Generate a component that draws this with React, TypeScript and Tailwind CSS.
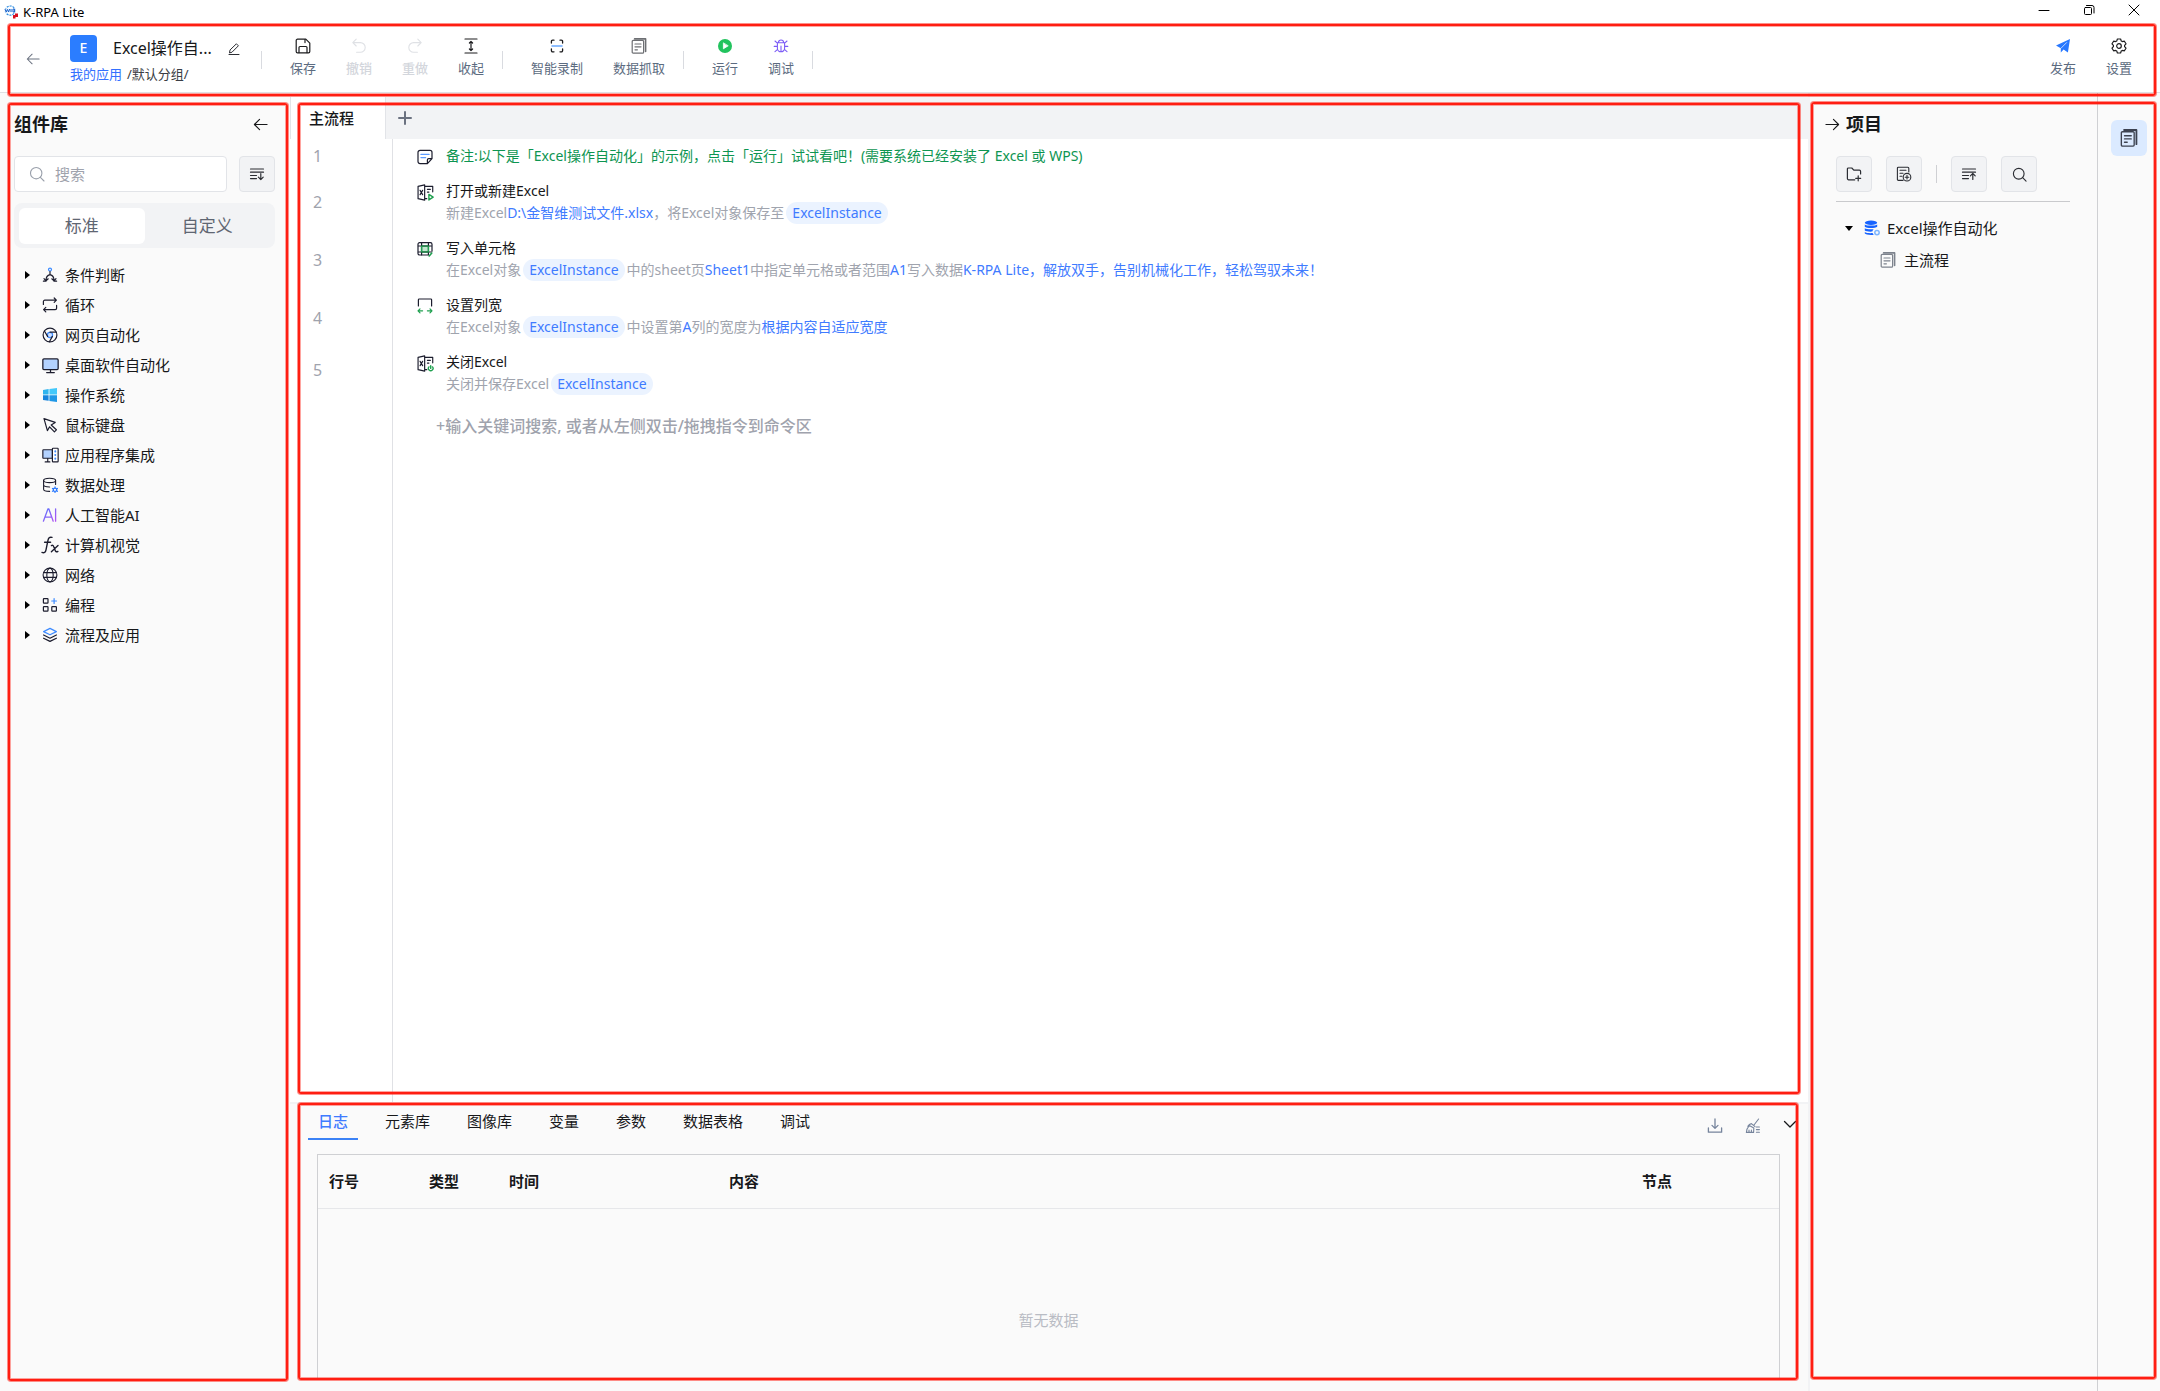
import React, { ReactNode } from "react";
import { clsx } from "clsx";

type IconProps = { className?: string; children: ReactNode; box?: number; sw?: number };

function Svg({ className = "size-4", children, box = 16, sw = 1.2 }: IconProps) {
  return (
    <svg
      viewBox={`0 0 ${box} ${box}`}
      className={clsx("shrink-0", className)}
      fill="none"
      stroke="currentColor"
      strokeWidth={sw}
      strokeLinecap="round"
      strokeLinejoin="round"
      aria-hidden="true"
    >
      {children}
    </svg>
  );
}

/* ---------- shared icons ---------- */

const ArrowLeft = ({ className }: { className?: string }) => (
  <Svg className={className}>
    <path d="M15 8H1.5M7 2.5L1.5 8L7 13.5" />
  </Svg>
);

const ArrowRight = ({ className }: { className?: string }) => (
  <Svg className={className}>
    <path d="M1 8h13.5M9 2.5L14.5 8L9 13.5" />
  </Svg>
);

const SearchIcon = ({ className, sw }: { className?: string; sw?: number }) => (
  <Svg className={className} sw={sw}>
    <circle cx="7.2" cy="7.2" r="5.7" />
    <path d="M11.4 11.4L15 15" />
  </Svg>
);

const DocStack = ({ className }: { className?: string }) => (
  <Svg className={className} sw={1.2}>
    <path d="M3.6 0.9h11v12.6" strokeWidth="1.6" />
    <rect x="1.2" y="2.4" width="11.4" height="12.8" rx="1" />
    <path d="M4 6h6M4 8.8h6M4 11.8h2.4" />
  </Svg>
);

const CollapseAll = ({ up }: { up?: boolean }) => (
  <Svg className="size-4">
    <path d="M1.5 3h13M1.5 6.2h13M1.5 9.5h6M1.5 12.6h6" />
    {up ? <path d="M11.8 13.4V7.4M9.4 9.8l2.4-2.4 2.4 2.4" /> : <path d="M11.8 7.6v6M9.4 11.2l2.4 2.4 2.4-2.4" />}
  </Svg>
);

/* ---------- toolbar icons ---------- */

const SaveIcon = () => (
  <Svg className="size-4" sw={1.2}>
    <path d="M2.5 1.2h8.3l4 4v8.3a1.3 1.3 0 0 1-1.3 1.3H2.5a1.3 1.3 0 0 1-1.3-1.3V2.5a1.3 1.3 0 0 1 1.3-1.3z" />
    <path d="M4 14.6V9.5a1 1 0 0 1 1-1h6a1 1 0 0 1 1 1v5.1M10 1.6v3" />
  </Svg>
);

const UndoIcon = () => (
  <Svg className="size-4" sw={1.1}>
    <path d="M5.2 1.2L1.8 4.6l3.4 3.4M1.8 4.6h7.6a4.8 4.8 0 0 1 0 9.6H5.6" />
  </Svg>
);

const RedoIcon = () => (
  <Svg className="size-4" sw={1.1}>
    <path d="M10.8 1.2l3.4 3.4-3.4 3.4M14.2 4.6H6.6a4.8 4.8 0 0 0 0 9.6h3.8" />
  </Svg>
);

const FoldIcon = () => (
  <Svg className="size-4" sw={1.2}>
    <path d="M2 1h12M2 15h12M8 3.4v9.2M6.4 5L8 3.4 9.6 5M6.4 11L8 12.6 9.6 11" />
  </Svg>
);

const RecordIcon = () => (
  <Svg className="size-4" sw={1.3}>
    <path d="M2.4 5V3.4a1.2 1.2 0 0 1 1.2-1.2H5M11 2.2h1.4a1.2 1.2 0 0 1 1.2 1.2V5M13.6 11v1.6a1.2 1.2 0 0 1-1.2 1.2H11M5 13.8H3.6a1.2 1.2 0 0 1-1.2-1.2V11" />
    <path d="M3.2 8h9.6" stroke="#8ebeff" strokeWidth="2" />
  </Svg>
);

const RunIcon = () => (
  <Svg className="size-4">
    <circle cx="8" cy="8" r="7" fill="#22c35e" stroke="none" />
    <path d="M6.4 5.2v5.6L10.9 8z" fill="#fff" stroke="#fff" strokeWidth="0.8" />
  </Svg>
);

const BugIcon = () => (
  <Svg className="size-4" sw={1.1}>
    <path d="M5.4 4.6a2.6 2.6 0 0 1 5.2 0M4.4 4.8h7.2v5.4a3.6 3.6 0 0 1-7.2 0zM8 8v5.6M1.2 8.4h3.2M11.6 8.4h3.2M2 3l2.4 2.2M14 3l-2.4 2.2M2 13.6l2.6-2.2M14 13.6l-2.6-2.2" />
  </Svg>
);

const SendIcon = () => (
  <Svg className="size-4">
    <path d="M15 1L12.9 14.6 8.6 11.6 5.8 14.4V10.2L1 7.6z" fill="#2878ff" stroke="none" />
    <path d="M6 10.2L11.6 4.6" stroke="#fff" strokeWidth="0.7" />
  </Svg>
);

const GearIcon = () => (
  <Svg className="size-4" sw={1.2}>
    <path d="M6.4 1h3.2l.6 1.9 1.2.7 2-.4 1.6 2.6L13.6 7.3v1.4l1.4 1.5-1.6 2.6-2-.4-1.2.7L9.6 15H6.4l-.6-1.9-1.2-.7-2 .4L1 10.2l1.4-1.5V7.3L1 5.8l1.6-2.6 2 .4 1.2-.7z" />
    <circle cx="8" cy="8" r="2.3" />
  </Svg>
);

/* ---------- component tree icons ---------- */

const treeIcons: Record<string, ReactNode> = {
  branch: (
    <Svg>
      <circle cx="8" cy="2.6" r="1.5" stroke="#3d8bff" />
      <path d="M8 4.6v3M8 7.6c-2.6.6-4 2.6-4 5.8M8 7.6c2.6.6 4 2.6 4 5.8M2 11.6l2 2.2 2.2-2M9.800 11.800l2.200 2 2-2.200M1.400 14.200h2.600M12 14.200h2.600" />
    </Svg>
  ),
  loop: (
    <Svg>
      <path d="M1.4 7.4V4.6a1.4 1.4 0 0 1 1.4-1.4h11.4M12.2 1l2.2 2.2-2.2 2.2M14.6 8.400v2.800a1.4 1.4 0 0 1-1.4 1.4H1.8M3.800 10.400l-2.200 2.200 2.200 2.200" />
    </Svg>
  ),
  chrome: (
    <Svg>
      <circle cx="8" cy="8" r="6.9" />
      <circle cx="8" cy="8" r="2.6" stroke="#3d8bff" fill="#cfe1ff" />
      <path d="M8 5.2h6.2M5.6 9.4L2.4 4M10.4 9.4l-3 5.4" />
    </Svg>
  ),
  monitor: (
    <Svg className="size-[17px]">
      <rect x="0.8" y="1.8" width="14.4" height="10" rx="1" fill="#b3d2ff" />
      <path d="M8 12v2.4M4.4 14.6h7.2" />
    </Svg>
  ),
  windows: (
    <Svg>
      <g stroke="none">
        <path d="M1 3l5.6-.9v5.4H1z" fill="#2fb4ee" />
        <path d="M7.4 2L15 .9v6.6H7.4z" fill="#43c8fa" />
        <path d="M1 8.3h5.6v5.5L1 13z" fill="#1683dc" />
        <path d="M7.4 8.3H15v6.8L7.4 14z" fill="#1e97e6" />
      </g>
    </Svg>
  ),
  mouse: (
    <Svg>
      <path d="M2 1.6l11.2 3.8-4 2.6 5.2 4.8-2 2-4.8-5-2.2 3.8z" />
    </Svg>
  ),
  apps: (
    <Svg className="size-[17px]" sw={1.1}>
      <rect x="0.8" y="2.6" width="9" height="8" rx="0.6" fill="#b3d2ff" />
      <path d="M5.4 10.8v3M3 14h4.4" />
      <rect x="9.8" y="1.2" width="5.4" height="12.8" rx="0.6" fill="#fff" />
      <path d="M12.5 4v.2M12.5 7.4v.2M12.5 10.8v.2" stroke="#3d8bff" strokeWidth="1.8" />
    </Svg>
  ),
  data: (
    <Svg sw={1.1}>
      <ellipse cx="7.6" cy="3.4" rx="6" ry="2.2" />
      <path d="M1.6 3.4v8.8c0 1.2 2.4 2.2 6 2.2M13.6 3.4v4M1.6 7.8c0 1.2 2.4 2.2 6 2.2" />
      <circle cx="13" cy="12.8" r="1.7" stroke="#2878ff" strokeWidth="1.2" />
      <path d="M13 9.9v1M13 14.8v1M10.4 11.4l.9.5M14.7 13.8l.9.5M15.6 11.4l-.9.5M11.3 13.8l-.9.5" stroke="#2878ff" />
    </Svg>
  ),
  ai: (
    <Svg sw={1.3}>
      <defs>
        <linearGradient id="ai-stroke" x1="0" y1="0" x2="16" y2="16" gradientUnits="userSpaceOnUse">
          <stop offset="0" stopColor="#4f7bff" />
          <stop offset="1" stopColor="#c04cf0" />
        </linearGradient>
      </defs>
      <path d="M1.4 14.2L6 1.8h.8l4.4 12.4M3 10.2h6.6M13.6 1.8v12.4" stroke="url(#ai-stroke)" />
    </Svg>
  ),
  fx: (
    <Svg className="size-[18px]" box={18} sw={1.4}>
      <path d="M11 1.4C8.400.6 7.400 2.2 6.900 4.600L5 13.8c-.5 2.600-2 3.600-4 2.600M3.600 6.200h6" />
      <path d="M10.400 9.600c1.400-.8 2 0 2.500 1.400l1.300 3.400c.5 1.400 1.400 1.800 2.700 1M17 9.600l-6.600 6.200" />
    </Svg>
  ),
  globe: (
    <Svg sw={1.1}>
      <circle cx="8" cy="8" r="6.9" />
      <ellipse cx="8" cy="8" rx="3.2" ry="6.9" />
      <path d="M1.6 5.6h12.8M1.6 10.4h12.8" />
    </Svg>
  ),
  code: (
    <Svg>
      <rect x="1.4" y="1.6" width="4.6" height="4.6" rx="0.6" />
      <rect x="1.4" y="9.6" width="4.6" height="4.6" rx="0.6" />
      <rect x="9.8" y="9.6" width="4.6" height="4.6" rx="0.6" />
      <path d="M12.1 1.6v4.8M9.7 4h4.8" stroke="#3d8bff" />
    </Svg>
  ),
  layers: (
    <Svg>
      <path d="M8 1.4l6.4 3.2L8 7.800 1.600 4.600z" stroke="#3d8bff" />
      <path d="M1.6 8L8 11.2 14.4 8M1.6 11.2L8 14.4l6.400-3.200" />
    </Svg>
  ),
};

const tree: [string, string][] = [
  ["branch", "条件判断"],
  ["loop", "循环"],
  ["chrome", "网页自动化"],
  ["monitor", "桌面软件自动化"],
  ["windows", "操作系统"],
  ["mouse", "鼠标键盘"],
  ["apps", "应用程序集成"],
  ["data", "数据处理"],
  ["ai", "人工智能AI"],
  ["fx", "计算机视觉"],
  ["globe", "网络"],
  ["code", "编程"],
  ["layers", "流程及应用"],
];

/* ---------- step icons ---------- */

const NoteIcon = () => (
  <Svg className="size-4">
    <path d="M10.4 14.6H3a2 2 0 0 1-2-2V3.400a2 2 0 0 1 2-2h10a2 2 0 0 1 2 2v6.200zM10.400 14.400V11a1.300 1.300 0 0 1 1.300-1.300h3.200" />
    <path d="M4 5.4h8M4 8.600h4.600" stroke="#5b9bff" strokeWidth="1.4" />
  </Svg>
);

const ExcelIcon = ({ children }: { children: ReactNode }) => (
  <Svg className="size-[17px]" sw={1.1}>
    <path d="M1 2.200L7.200.800v14.400L1 13.800zM7.200 2.200h7.600v5.200M9.800 5h2.800M9.800 7.600h1.400M7.200 13.800h2M2.900 6l2.400 4M5.300 6l-2.400 4" />
    <g stroke="#1fa04f" strokeWidth="1.3">{children}</g>
  </Svg>
);

const CellIcon = () => (
  <Svg className="size-4">
    <rect x="4.4" y="5" width="7.200" height="6" fill="#bfe8cd" stroke="#1fa04f" />
    <path d="M1.400 5h13M1.400 11h13M4.600 1.800v12M11.400 1.800v12" />
    <path d="M4.600 5h6.800v6H4.600z" stroke="#1fa04f" />
    <path d="M11 14H2.600A1.600 1.600 0 0 1 1 12.400V3.200a1.600 1.600 0 0 1 1.600-1.600h10.800A1.600 1.600 0 0 1 15 3.200v7" />
    <path d="M14.800 12l-2.600 3" stroke="#1fa04f" strokeWidth="1.600" />
  </Svg>
);

const WidthIcon = () => (
  <Svg className="size-4">
    <path d="M1.400 8V1.800a.8.8 0 0 1 .8-.8h11.600a.8.8 0 0 1 .8.800V8" />
    <path d="M1 12.800h4.600M3 10.800l-2 2 2 2M10.400 12.800H15M13 10.800l2 2-2 2" stroke="#1fa04f" />
  </Svg>
);

/* ---------- small building blocks ---------- */

function Frame({ className }: { className: string }) {
  return (
    <div
      className={clsx(
        "pointer-events-none absolute z-10 rounded-[3px] border-2 border-[#ff1e12] shadow-[0_0_0_1px_rgba(255,30,18,0.5),inset_0_0_0_1px_rgba(255,30,18,0.4)]",
        className
      )}
    />
  );
}

function Tool({ icon, label, disabled }: { icon: ReactNode; label: string; disabled?: boolean }) {
  return (
    <button
      type="button"
      disabled={disabled}
      className={clsx(
        "flex flex-col items-center gap-1.5 px-[15px] text-[13px] leading-4",
        disabled ? "font-medium text-[#d3d6dc]" : "text-[#5c6b80]"
      )}
    >
      <span className={disabled ? "text-[#dfe1e5]" : "text-[#1c1c1e]"}>{icon}</span>
      {label}
    </button>
  );
}

const Divider = () => <span className="mt-1.5 mr-[13px] ml-[3px] h-[18px] w-px bg-[#d9dbe0]" />;

function SquareButton({ label, children }: { label: string; children: ReactNode }) {
  return (
    <button
      type="button"
      aria-label={label}
      className="flex size-9 shrink-0 items-center justify-center rounded border border-[#e2e4e8] bg-[#f2f3f5] text-[#2b2d33]"
    >
      {children}
    </button>
  );
}

const Pill = ({ children }: { children: ReactNode }) => (
  <span className="mx-0.5 inline-block h-[22px] rounded-full bg-[#ebf3ff] px-1.5 text-[#3f7bff]">{children}</span>
);

const Val = ({ children }: { children: ReactNode }) => <span className="text-[#3f7bff]">{children}</span>;

function Step({ icon, title, children }: { icon: ReactNode; title: string; children: ReactNode }) {
  return (
    <li className="flex h-[57px] gap-3">
      <span className="mt-0.5 flex h-5 w-[18px] items-center justify-center text-[#1c1d2e]">{icon}</span>
      <div className="text-[14px] leading-[22px]">
        <p className="h-[22px] text-[#17181a]">{title}</p>
        <p className="h-[22px] text-[#a0a4ae]">{children}</p>
      </div>
    </li>
  );
}

/* ---------- page sections ---------- */

function TitleBar() {
  return (
    <div className="flex h-[23px] shrink-0 items-center bg-white">
      <svg viewBox="0 0 16 14" className="ml-1 h-[14px] w-4" fill="none" aria-hidden="true">
        <ellipse cx="6.2" cy="5.6" rx="4.8" ry="4.600" stroke="#2b8be0" strokeWidth="1.200" strokeDasharray="2 1" />
        <rect x="0.5" y="3.6" width="11.4" height="4" fill="#e8f3ff" />
        <path d="M1 4l1.200 3L3.400 4.400 4.600 7 5.600 4M7 4v3M9 4v3h1.600V4z" stroke="#1760c8" strokeWidth="1" />
        <path d="M9 10h2V8.500h3V12h-2.500v1.500H9z" fill="#d8101f" />
      </svg>
      <span className="ml-[3px] text-[13px] leading-4 text-black">K-RPA Lite</span>
      <div className="mr-5 ml-auto flex items-center gap-[33px] pb-1 text-black">
        <button type="button" aria-label="最小化">
          <Svg className="size-3" box={12} sw={1}>
            <path d="M1 6.500h10" />
          </Svg>
        </button>
        <button type="button" aria-label="还原">
          <Svg className="size-3" box={12} sw={1}>
            <rect x="1.500" y="3.500" width="7" height="7" rx="1" />
            <path d="M3.500 1.500h5.500a2 2 0 0 1 2 2V9" />
          </Svg>
        </button>
        <button type="button" aria-label="关闭">
          <Svg className="size-3" box={12} sw={1}>
            <path d="M1 1l10 10M11 1L1 11" />
          </Svg>
        </button>
      </div>
    </div>
  );
}

function Header() {
  return (
    <header className="relative flex h-[70px] shrink-0 items-start border-b border-[#dfe0e4] bg-white">
      <Frame className="top-px right-1 -bottom-1 left-2" />
      <button type="button" aria-label="返回" className="mt-[29px] ml-[26px] text-[#6b7280]">
        <ArrowLeft className="size-[14px]" />
      </button>
      <div className="mt-3 ml-[30px] w-[191px]">
        <div className="flex h-[27px] items-center">
          <span className="flex size-[27px] items-center justify-center rounded-sm bg-[#2b7dff] pb-0.5 text-[14px] leading-4 font-medium text-white">
            E
          </span>
          <h1 title="Excel操作自动化" className="ml-4 w-[103px] pb-0.5 text-[16px] leading-6 whitespace-nowrap text-[#17181a]">
            Excel操作自...
          </h1>
          <button type="button" aria-label="重命名" className="ml-3 text-[#2b2d33]">
            <Svg className="size-3" box={12} sw={1}>
              <path d="M1.500 9.500l.6-2.600L8.400.800l2 2-6.200 6.200zM1 11.500h10" />
            </Svg>
          </button>
        </div>
        <nav className="mt-0.5 flex gap-[5px] text-[13px] leading-5">
          <a href="#apps" className="text-[#3370ff]">
            我的应用
          </a>
          <span className="text-[#3a3d44]">/默认分组/</span>
        </nav>
      </div>
      <div className="mt-[15px] -ml-[3px] flex items-center">
        <Divider />
        <Tool icon={<SaveIcon />} label="保存" />
        <Tool icon={<UndoIcon />} label="撤销" disabled />
        <Tool icon={<RedoIcon />} label="重做" disabled />
        <Tool icon={<FoldIcon />} label="收起" />
        <Divider />
        <Tool icon={<RecordIcon />} label="智能录制" />
        <Tool
          icon={
            <span className="text-[#6d6f73]">
              <DocStack className="size-4" />
            </span>
          }
          label="数据抓取"
        />
        <Divider />
        <Tool icon={<RunIcon />} label="运行" />
        <Tool
          icon={
            <span className="text-[#7c5cf6]">
              <BugIcon />
            </span>
          }
          label="调试"
        />
        <Divider />
      </div>
      <div className="mt-[15px] mr-[13px] ml-auto flex">
        <Tool icon={<SendIcon />} label="发布" />
        <Tool icon={<GearIcon />} label="设置" />
      </div>
    </header>
  );
}

function Library() {
  return (
    <aside className="relative w-[290px] shrink-0 pr-[15px] pl-[14px]">
      <Frame className="top-2.5 right-0.5 bottom-2.5 left-2" />
      <div className="mt-[17px] flex h-7 items-center justify-between pr-[7px]">
        <h2 className="text-[18px] leading-7 font-bold text-[#17181a]">组件库</h2>
        <button type="button" aria-label="收起组件库" className="text-[#17181a]">
          <ArrowLeft className="size-[15px]" />
        </button>
      </div>
      <div className="mt-[18px] flex gap-3">
        <label className="flex h-9 min-w-0 flex-1 items-center gap-2.5 rounded border border-[#e2e4e8] bg-white pl-[14px] text-[#9aa0ab]">
          <SearchIcon className="size-4" sw={1.1} />
          <input
            type="text"
            aria-label="搜索"
            placeholder="搜索"
            className="w-full min-w-0 bg-transparent text-[15px] leading-6 outline-none placeholder:text-[#9fa3ad]"
          />
        </label>
        <SquareButton label="全部收起">
          <CollapseAll />
        </SquareButton>
      </div>
      <div className="mt-[11px] grid h-[45px] grid-cols-2 rounded-lg bg-[#f2f3f5] p-[5px] text-[17px] leading-6 text-[#5f6672]">
        <button type="button" className="h-9 rounded-md bg-white">
          标准
        </button>
        <button type="button" className="h-9">
          自定义
        </button>
      </div>
      <ul className="mt-3">
        {tree.map(([icon, label]) => (
          <li key={label} className="flex h-[30px] items-center pl-[11px] text-[15px] leading-6 text-[#17181a]">
            <svg viewBox="0 0 5 8" className="h-2 w-[5px]" aria-hidden="true">
              <path d="M0 0l5 4-5 4z" fill="#000" />
            </svg>
            <span className="ml-[11px] flex w-[18px] justify-center text-[#1c1d2e]">{treeIcons[icon]}</span>
            <span className="ml-[6px]">{label}</span>
          </li>
        ))}
      </ul>
    </aside>
  );
}

function Editor() {
  return (
    <section className="relative flex min-h-0 flex-1 flex-col bg-white">
      <Frame className="top-2.5 right-2 bottom-2 left-2" />
      <div className="mt-1 flex h-[42px] shrink-0 bg-[#f2f3f5]">
        <button
          type="button"
          className="w-24 border-x border-[#e2e4e8] bg-white pl-[18px] text-left text-[15px] leading-6 font-medium text-[#17181a]"
        >
          主流程
        </button>
        <button type="button" aria-label="新建流程" className="ml-3 text-[#6b7280]">
          <Svg className="size-[14px]" box={14} sw={2}>
            <path d="M7 1v12M1 7h12" />
          </Svg>
        </button>
      </div>
      <div className="flex min-h-0 flex-1">
        <ol className="w-[103px] shrink-0 border-r border-[#e0e1e5] pl-[23px] text-[16px] leading-6 text-[#9fa3ad]">
          <li className="flex h-[34px] items-center">1</li>
          <li className="flex h-[58px] items-center">2</li>
          <li className="flex h-[58px] items-center">3</li>
          <li className="flex h-[57px] items-center">4</li>
          <li className="flex h-[47px] items-center">5</li>
        </ol>
        <div className="min-w-0 flex-1 pl-[23px] whitespace-nowrap">
          <ul>
            <li className="flex h-[41px] gap-3 pt-[6px]">
              <span className="mt-0.5 flex h-5 w-[18px] items-center justify-center text-[#1c1d2e]">
                <NoteIcon />
              </span>
              <p className="text-[14px] leading-[22px] text-[#0d9551]">
                备注:以下是「Excel操作自动化」的示例，点击「运行」试试看吧！(需要系统已经安装了 Excel 或 WPS)
              </p>
            </li>
            <Step
              icon={
                <ExcelIcon>
                  <path d="M11.200 9.800v5.200l4-2.600z" />
                </ExcelIcon>
              }
              title="打开或新建Excel"
            >
              新建Excel<Val>D:\金智维测试文件.xlsx</Val>，将Excel对象保存至<Pill>ExcelInstance</Pill>
            </Step>
            <Step icon={<CellIcon />} title="写入单元格">
              在Excel对象<Pill>ExcelInstance</Pill>中的sheet页<Val>Sheet1</Val>中指定单元格或者范围<Val>A1</Val>写入数据
              <Val>K-RPA Lite，解放双手，告别机械化工作，轻松驾驭未来！</Val>
            </Step>
            <Step icon={<WidthIcon />} title="设置列宽">
              在Excel对象<Pill>ExcelInstance</Pill>中设置第<Val>A</Val>列的宽度为<Val>根据内容自适应宽度</Val>
            </Step>
            <Step
              icon={
                <ExcelIcon>
                  <path d="M11.200 11.200a2.200 2.200 0 1 0 3.400 0M12.900 10v2.600" />
                </ExcelIcon>
              }
              title="关闭Excel"
            >
              关闭并保存Excel<Pill>ExcelInstance</Pill>
            </Step>
          </ul>
          <p className="mt-1.5 ml-5 text-[16px] leading-6 font-medium text-[#9fa3ad]">
            +输入关键词搜索, 或者从左侧双击/拖拽指令到命令区
          </p>
        </div>
      </div>
    </section>
  );
}

const tabs = ["日志", "元素库", "图像库", "变量", "参数", "数据表格", "调试"];

function LogPanel() {
  return (
    <section className="relative flex h-[289px] shrink-0 flex-col border-t-2 border-[#f2f3f5] bg-[#fafafa] pr-7 pb-3 pl-[27px]">
      <Frame className="-top-px right-2.5 bottom-[11px] left-2" />
      <div className="-mr-[17px] -ml-[9px] flex h-[50px] items-start">
        <div role="tablist" className="flex gap-[17px]">
          {tabs.map((t, i) => (
            <button
              key={t}
              type="button"
              role="tab"
              aria-selected={i === 0}
              className={clsx(
                "h-9 border-b-2 px-2.5 text-[15px] leading-[34px]",
                i === 0 ? "border-[#3b82f6] font-medium text-[#3f7bff]" : "border-transparent text-[#17181a]"
              )}
            >
              {t}
            </button>
          ))}
        </div>
        <div className="mt-[14px] ml-auto flex items-start gap-[22px] text-[#76849c]">
          <button type="button" aria-label="下载日志">
            <Svg className="size-4" sw={1.3}>
              <path d="M8 1v9M5 7.400L8 10.400l3-3M1.400 10v4.200h13.200V10" />
            </Svg>
          </button>
          <button type="button" aria-label="清空日志">
            <Svg className="size-4" sw={1.1}>
              <path d="M13.600 1L9 7M6.400 5.600l3.600 3M2.800 8.200c1-1.600 2.400-2.400 3.600-2.600M1.400 14.400c.2-2.600.8-4.600 2-5.600l1.400-1 4 2.200-.2 4.400zM4 14v-2M6.400 14v-2M11.400 9h3M11.400 11.600h3M11.400 14.200h3" />
            </Svg>
          </button>
          <button type="button" aria-label="收起面板" className="text-[#17181a]">
            <Svg className="size-[14px]" box={14} sw={1.3}>
              <path d="M1.500 3.500L7 9l5.500-5.500" />
            </Svg>
          </button>
        </div>
      </div>
      <div className="flex min-h-0 flex-1 flex-col border border-b-0 border-[#cfd0d3]">
        <table className="w-full table-fixed text-left text-[15px] leading-6 text-[#17181a]">
          <thead>
            <tr className="h-[53px] border-b border-[#e6e7ea]">
              <th className="w-[100px] pl-[11px] font-bold">行号</th>
              <th className="w-20 pl-[11px] font-bold">类型</th>
              <th className="w-[220px] pl-[11px] font-bold">时间</th>
              <th className="pl-[11px] font-bold">内容</th>
              <th className="w-[148px] pl-[11px] font-bold">节点</th>
            </tr>
          </thead>
        </table>
        <p className="mt-[99px] text-center text-[15px] leading-6 text-[#b9bcc4]">暂无数据</p>
      </div>
    </section>
  );
}

function ProjectPanel() {
  return (
    <aside className="relative flex w-[352px] shrink-0 border-l-2 border-[#f2f3f5]">
      <Frame className="top-[9px] right-1 bottom-3 left-px" />
      <div className="flex-1 pr-[27px] pl-[26px]">
        <div className="mt-[17px] -ml-[11px] flex h-7 items-center gap-1.5">
          <button type="button" aria-label="收起项目" className="text-[#17181a]">
            <ArrowRight className="size-[15px]" />
          </button>
          <h2 className="text-[18px] leading-7 font-bold text-[#17181a]">项目</h2>
        </div>
        <div className="mt-[18px] flex h-[46px] items-start gap-[14px] border-b border-[#c9cacd]">
          <SquareButton label="新建文件夹">
            <Svg>
              <path d="M8.800 13.800H2.600a1.200 1.200 0 0 1-1.200-1.200V3a1 1 0 0 1 1-1h3.400l2 2.200h5.600a1.200 1.200 0 0 1 1.200 1.200V8M12.200 9.800v5M9.700 12.300h5" />
            </Svg>
          </SquareButton>
          <SquareButton label="新建流程">
            <Svg sw={1.1}>
              <path d="M7 14.400H2.400a1 1 0 0 1-1-1V2.200a1 1 0 0 1 1-1h9.400a1 1 0 0 1 1 1V6M4 4.200h6M4 7.200h3M4 10.200h2" />
              <circle cx="11" cy="11.200" r="3.800" />
              <path d="M11 9.400V13M9.200 11.200h3.600" />
            </Svg>
          </SquareButton>
          <span className="mt-[9px] h-[18px] w-px bg-[#cfd0d3]" />
          <SquareButton label="全部收起">
            <CollapseAll up />
          </SquareButton>
          <SquareButton label="搜索项目">
            <SearchIcon className="size-[15px]" />
          </SquareButton>
        </div>
        <ul className="mt-2.5 text-[15px] leading-6 text-[#17181a]">
          <li className="flex h-8 items-center pl-[9px]">
            <svg viewBox="0 0 8 5" className="h-[5px] w-2" aria-hidden="true">
              <path d="M0 0h8L4 5z" fill="#000" />
            </svg>
            <Svg className="ml-[11px] size-4">
              <g fill="#1763ff" stroke="none">
                <ellipse cx="7" cy="2.800" rx="6.200" ry="2.200" />
                <path d="M.8 4.400c1.600 1.600 10.800 1.600 12.400 0v2.400C11.600 8.400 2.400 8.400.8 6.800zM.8 8.200C2 9.200 6 9.600 9.800 9.200c-1 .7-1.400 1.600-1.400 2.400C5 11.800 1.800 11.400.8 10.600zM.8 12c1.200 1 4.600 1.400 7.800 1.100.2.700.6 1.300 1.200 1.800-4 .5-8.200-.1-9-1.300z" />
              </g>
              <circle cx="13" cy="12.600" r="2.200" stroke="#7db5ff" strokeWidth="1.500" />
            </Svg>
            <span className="ml-[7px]">Excel操作自动化</span>
          </li>
          <li className="flex h-8 items-center pl-11">
            <span className="text-[#7d838d]">
              <DocStack className="size-4" />
            </span>
            <span className="ml-2">主流程</span>
          </li>
        </ul>
      </div>
      <div className="w-[63px] border-l border-[#cfd0d3] pt-[27px] pl-[13px]">
        <button
          type="button"
          aria-label="项目"
          className="flex size-9 items-center justify-center rounded-md bg-[#dbeaff] text-[#3c4250]"
        >
          <DocStack className="size-[18px]" />
        </button>
      </div>
    </aside>
  );
}

export default function App() {
  return (
    <div className="flex h-screen min-h-[900px] flex-col overflow-hidden bg-[#fafafa] font-['Noto_Sans','Noto_Sans_CJK_SC',sans-serif]">
      <TitleBar />
      <Header />
      <div className="flex min-h-0 flex-1">
        <Library />
        <main className="flex min-w-0 flex-1 flex-col">
          <Editor />
          <LogPanel />
        </main>
        <ProjectPanel />
      </div>
    </div>
  );
}
